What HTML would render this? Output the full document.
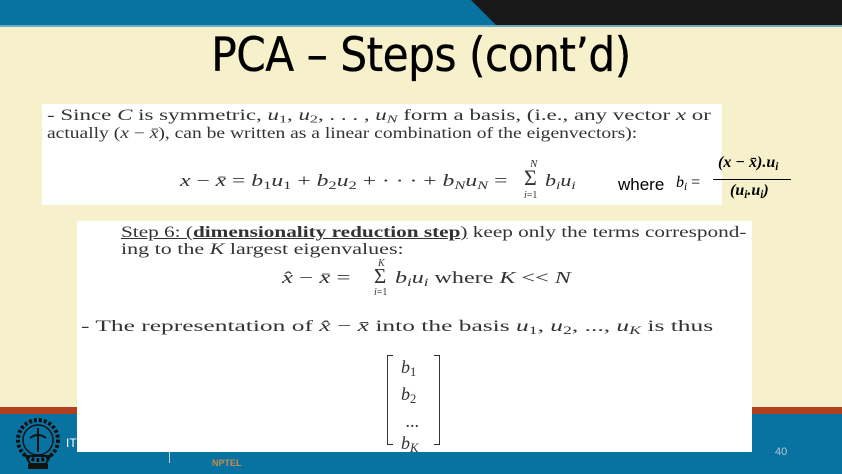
<!DOCTYPE html>
<html><head><style>
*{margin:0;padding:0;box-sizing:border-box}
body{width:842px;height:474px;overflow:hidden;position:relative;background:#f6f1cb;font-family:"Liberation Serif",serif;color:#222}
.a{position:absolute;white-space:nowrap;transform-origin:0 50%}
i{font-style:italic}
sub{font-size:0.7em;vertical-align:-0.25em}
</style></head><body>
<div class="a" style="left:0;top:0;width:842px;height:26px;background:#0873a1"></div>
<svg class="a" style="left:0;top:0" width="842" height="28"><polygon points="471,0 842,0 842,26 497,26" fill="#181818"/><rect x="0" y="25" width="842" height="2" fill="#6fa9bf"/></svg>
<div class="a" style="left:0;top:28px;width:842px;text-align:center;font-family:'DejaVu Sans Condensed','Liberation Sans',sans-serif;font-size:47px;color:#000;letter-spacing:-0.5px;-webkit-text-stroke:0.3px #000">PCA – Steps (cont’d)</div>

<div class="a" style="left:0;top:407px;width:842px;height:7px;background:#b0401f"></div>
<div class="a" style="left:0;top:414px;width:842px;height:60px;background:#0873a1"></div>
<svg class="a" style="left:14px;top:416px" width="50" height="56"><circle cx="24" cy="24" r="20" fill="none" stroke="#111" stroke-width="4" stroke-dasharray="3 2"/><circle cx="24" cy="24" r="15" fill="none" stroke="#111" stroke-width="1.5"/><path d="M24 12v24M16 22q8-6 16 0M12 40h24l-4 8h-16z" stroke="#111" stroke-width="2" fill="none"/><rect x="14" y="48" width="20" height="5" fill="#111"/></svg>
<div class="a" style="left:66px;top:436px;color:#fff;font-family:'Liberation Sans',sans-serif;font-size:12px">IT</div>
<div class="a" style="left:169px;top:435px;width:1px;height:28px;background:#ccc"></div>
<div class="a" style="left:212px;top:458px;color:#c9894a;font-family:'Liberation Sans',sans-serif;font-size:9px;font-weight:bold">NPTEL</div>
<div class="a" style="left:775px;top:446px;color:#b5c7d3;font-family:'Liberation Sans',sans-serif;font-size:11px">40</div>

<div class="a" style="left:42px;top:104px;width:680px;height:101px;background:#fff"></div>
<div class="a" style="left:47px;top:107px;font-size:15.5px;color:#333;transform:scaleX(1.48)">- Since <i>C</i> is symmetric, <i>u</i><sub>1</sub>, <i>u</i><sub>2</sub>, . . . , <i>u<sub>N</sub></i> form a basis, (i.e., any vector <i>x</i> or</div>
<div class="a" style="left:47px;top:125px;font-size:15.5px;color:#333;transform:scaleX(1.26)">actually (<i>x</i> − <i>x̄</i>), can be written as a linear combination of the eigenvectors):</div>
<div class="a" style="left:180px;top:171px;font-size:17px;color:#333;transform:scaleX(1.39)"><i>x</i> − <i>x̄</i> = <i>b</i><sub>1</sub><i>u</i><sub>1</sub> + <i>b</i><sub>2</sub><i>u</i><sub>2</sub> + · · · + <i>b<sub>N</sub>u<sub>N</sub></i> = </div>
<div class="a" style="left:530px;top:158px;font-size:11px;color:#333"><i>N</i></div>
<div class="a" style="left:524px;top:165px;font-size:22px;color:#333">Σ</div>
<div class="a" style="left:524px;top:190px;font-size:10px;color:#333"><i>i</i>=1</div>
<div class="a" style="left:545px;top:171px;font-size:17px;color:#333;transform:scaleX(1.3)"><i>b<sub>i</sub>u<sub>i</sub></i></div>
<div class="a" style="left:618px;top:175px;font-family:'Liberation Sans',sans-serif;font-size:17px;color:#000">where</div>
<div class="a" style="left:676px;top:174px;font-size:16px;color:#000"><i>b</i><sub><i>i</i></sub> =</div>
<div class="a" style="left:718px;top:154px;font-size:16px;font-weight:bold;font-style:italic;color:#000">(x − x̄).u<sub>i</sub></div>
<div class="a" style="left:713px;top:179px;width:78px;height:1px;background:#000"></div>
<div class="a" style="left:730px;top:182px;font-size:16px;font-weight:bold;font-style:italic;color:#000">(u<sub>i</sub>.u<sub>i</sub>)</div>

<div class="a" style="left:77px;top:221px;width:675px;height:231px;background:#fff"></div>
<div class="a" style="left:121px;top:224px;font-size:15.5px;color:#333;transform:scaleX(1.37)"><u>Step 6: (<b>dimensionality reduction step</b>)</u> keep only the terms correspond-</div>
<div class="a" style="left:121px;top:241px;font-size:15.5px;color:#333;transform:scaleX(1.42)">ing to the <i>K</i> largest eigenvalues:</div>
<div class="a" style="left:282px;top:268px;font-size:16.5px;color:#333;transform:scaleX(1.5)"><i>x̂</i> − <i>x̄</i> = </div>
<div class="a" style="left:378px;top:258px;font-size:10px;color:#333"><i>K</i></div>
<div class="a" style="left:374px;top:264px;font-size:21px;color:#333">Σ</div>
<div class="a" style="left:374px;top:287px;font-size:10px;color:#333"><i>i</i>=1</div>
<div class="a" style="left:395px;top:268px;font-size:16.5px;color:#333;transform:scaleX(1.46)"><i>b<sub>i</sub>u<sub>i</sub></i> where <i>K</i> &lt;&lt; <i>N</i></div>
<div class="a" style="left:81px;top:318px;font-size:16px;color:#333;transform:scaleX(1.59)">- The representation of <i>x̂</i> − <i>x̄</i> into the basis <i>u</i><sub>1</sub>, <i>u</i><sub>2</sub>, ..., <i>u<sub>K</sub></i> is thus</div>
<div class="a" style="left:387px;top:355px;width:6px;height:90px;border:1.5px solid #333;border-right:none"></div>
<div class="a" style="left:434px;top:355px;width:6px;height:90px;border:1.5px solid #333;border-left:none"></div>
<div class="a" style="left:401px;top:356px;font-size:18px;line-height:22px;color:#333"><i>b</i><sub>1</sub><br><i>b</i><sub>2</sub><br>&nbsp;...<br><i>b<sub>K</sub></i></div>
</body></html>
